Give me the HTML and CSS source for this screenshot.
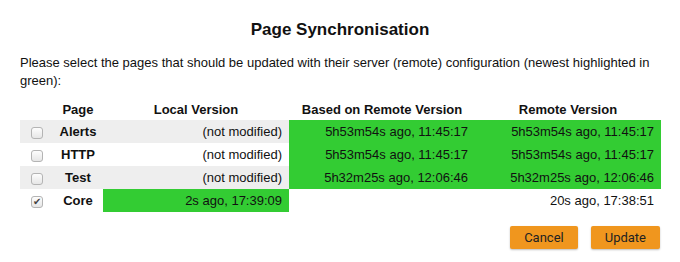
FILE: index.html
```html
<!DOCTYPE html>
<html lang="en">
<head>
    <meta charset="UTF-8">
    <title>Page Synchronisation</title>
    <link rel="stylesheet" href="styles.css">
</head>
<body>
    <div class="dialog">
        <h1>Page Synchronisation</h1>
        <p class="intro">Please select the pages that should be updated with their server (remote) configuration (newest highlighted in green):</p>

        <table class="sync">
            <colgroup>
                <col class="col-check">
                <col class="col-page">
                <col class="col-ver">
                <col class="col-ver">
                <col class="col-ver">
            </colgroup>
            <thead>
                <tr>
                    <th></th>
                    <th>Page</th>
                    <th>Local Version</th>
                    <th>Based on Remote Version</th>
                    <th>Remote Version</th>
                </tr>
            </thead>
            <tbody>
                <tr class="odd">
                    <td class="check"><label><input type="checkbox"><span class="box"></span></label></td>
                    <td class="page">Alerts</td>
                    <td>(not modified)</td>
                    <td class="newest">5h53m54s ago, 11:45:17</td>
                    <td class="newest">5h53m54s ago, 11:45:17</td>
                </tr>
                <tr>
                    <td class="check"><label><input type="checkbox"><span class="box"></span></label></td>
                    <td class="page">HTTP</td>
                    <td>(not modified)</td>
                    <td class="newest">5h53m54s ago, 11:45:17</td>
                    <td class="newest">5h53m54s ago, 11:45:17</td>
                </tr>
                <tr class="odd">
                    <td class="check"><label><input type="checkbox"><span class="box"></span></label></td>
                    <td class="page">Test</td>
                    <td>(not modified)</td>
                    <td class="newest">5h32m25s ago, 12:06:46</td>
                    <td class="newest">5h32m25s ago, 12:06:46</td>
                </tr>
                <tr>
                    <td class="check"><label><input type="checkbox" checked><span class="box"></span></label></td>
                    <td class="page">Core</td>
                    <td class="newest">2s ago, 17:39:09</td>
                    <td></td>
                    <td>20s ago, 17:38:51</td>
                </tr>
            </tbody>
        </table>

        <div class="actions">
            <button type="button">Cancel</button>
            <button type="button">Update</button>
        </div>
    </div>
</body>
</html>
```

FILE: styles.css
```css
body {
    font-family: "Liberation Sans", Arial, sans-serif;
    font-size: 13px;
    color: #111;
    background-color: #fff;
    margin: 0;
}

.dialog {
    padding: 20px 20px 13px;
}

h1 {
    font-size: 17px;
    line-height: 20px;
    text-align: center;
    margin: 0 0 14px;
}

.intro {
    line-height: 18px;
    margin: 0 0 10px;
}

.sync {
    width: 640px;
    border-collapse: collapse;
    table-layout: fixed;
}

.col-check {
    width: 33px;
}

.col-page {
    width: 50px;
}

.col-ver {
    width: 186px;
}

.sync th {
    font-weight: bold;
    line-height: 16px;
    padding: 2px 0;
    text-align: center;
}

.sync td {
    line-height: 15px;
    padding: 4px 7px;
    text-align: right;
    white-space: nowrap;
}

.sync tr.odd td {
    background-color: #eee;
}

.sync td.newest,
.sync tr.odd td.newest {
    background-color: #33cc33;
}

.sync td.page {
    font-weight: bold;
    text-align: center;
    padding: 4px 0;
}

.sync td.check {
    padding: 4px 0 4px 11px;
    text-align: left;
}

.check label {
    display: block;
    width: 12px;
    height: 12px;
    position: relative;
}

.check input {
    position: absolute;
    opacity: 0;
    margin: 0;
    width: 12px;
    height: 12px;
}

.box {
    display: block;
    box-sizing: border-box;
    width: 12px;
    height: 12px;
    margin-top: 2px;
    border: 1px solid #b4b4b4;
    border-radius: 3px;
    background: linear-gradient(#fdfdfd, #e6e6e6);
    font-size: 10px;
    line-height: 10px;
    text-align: center;
    color: #444;
}

.check input:checked + .box::after {
    content: "\2714";
}

.actions {
    display: flex;
    justify-content: flex-end;
    gap: 13px;
    margin-top: 14px;
}

button {
    font-family: Roboto, "Liberation Sans", sans-serif;
    font-size: 13px;
    color: #222;
    background-color: #f0961e;
    border: none;
    border-radius: 2px;
    height: 23px;
    padding: 0 14px;
    box-shadow: 0 1px 2px rgba(0, 0, 0, 0.25);
    cursor: pointer;
}

button:hover {
    background-color: #e0861a;
}
```
